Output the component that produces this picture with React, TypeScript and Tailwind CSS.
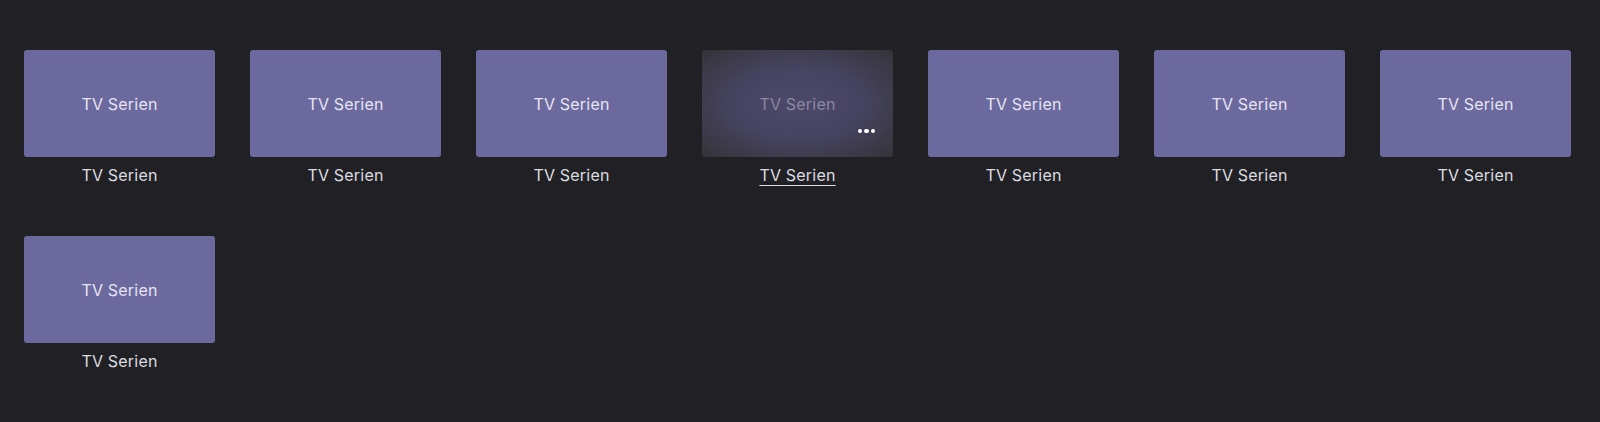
import { useState } from "react";

const ITEMS = Array.from({ length: 8 }, (_, i) => ({ id: i, title: "TV Serien" }));

function Tile({ title, hovered }: { title: string; hovered: boolean }) {
  return (
    <div className="flex flex-col items-center w-[191px]">
      {hovered ? (
        <div className="relative w-[191px] h-[107px] rounded-[3px] flex items-center justify-center bg-[radial-gradient(ellipse_at_center,#4b4869_0%,#474463_45%,#3a3843_85%,#333238_100%)]">
          <span className="text-[16px] text-[#8b89a0]">{title}</span>
          <div className="absolute right-[18px] bottom-[24px] flex gap-[2px]">
            <span className="w-[4.5px] h-[4.5px] rounded-full bg-white" />
            <span className="w-[4.5px] h-[4.5px] rounded-full bg-white" />
            <span className="w-[4.5px] h-[4.5px] rounded-full bg-white" />
          </div>
        </div>
      ) : (
        <div className="w-[191px] h-[107px] rounded-[3px] bg-[#6c699e] flex items-center justify-center">
          <span className="text-[16px] text-[#e6e4f2]">{title}</span>
        </div>
      )}
      <span className={`mt-[6px] leading-[24px] text-[16px] text-[#dcdce0] ${hovered ? "underline underline-offset-[4px] decoration-[1px]" : ""}`}>
        {title}
      </span>
    </div>
  );
}

export default function App() {
  const [hover] = useState(3);
  return (
    <div className="min-h-[422px] w-full bg-[#212125] pt-[50px] pl-[24px] font-['Inter','Noto_Sans',sans-serif] tracking-[0.2px]">
      <div className="grid grid-cols-[repeat(7,191px)] gap-x-[35px] gap-y-[49px]">
        {ITEMS.map(it => <Tile key={it.id} title={it.title} hovered={it.id === hover} />)}
      </div>
    </div>
  );
}
